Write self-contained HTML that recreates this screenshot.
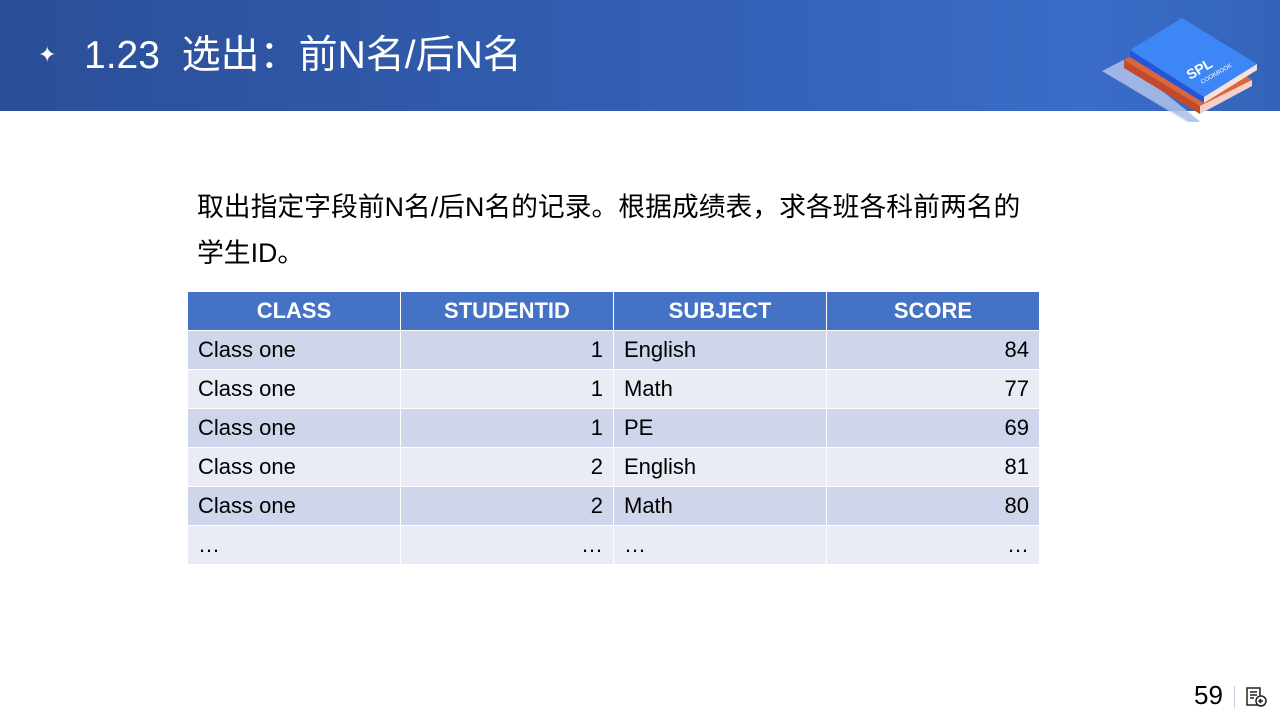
<!DOCTYPE html>
<html><head><meta charset="utf-8"><style>
body{margin:0;width:1280px;height:720px;position:relative;background:#fff;font-family:"Liberation Sans","Noto Sans CJK SC",sans-serif;overflow:hidden}
.hdr{position:absolute;left:0;top:0;width:1280px;height:111px;background:linear-gradient(90deg,#2b4e97 0%,#3462b8 60%,#3a6cc8 85%,#3464b9 100%)}
.title{position:absolute;left:84px;top:33px;color:#fff;font-size:39px;line-height:46px;white-space:nowrap}
.star{position:absolute;left:38px;top:42px;color:#fff;font-size:22px}
.p{position:absolute;left:197px;font-size:26.8px;line-height:34px;color:#000;white-space:nowrap}
table{position:absolute;left:187px;top:292px;border-collapse:collapse;font-size:22px}
td{height:39px;padding:0 10px;box-sizing:border-box;border:1px solid #fff;width:213px}
th{background:#4472c4;color:#fff;height:38px;box-sizing:border-box;padding:0;font-size:22px;border:1px solid #fff;border-top:0}
tr.o td{background:#cfd5ea}tr.e td{background:#e9ebf5}
.r{text-align:right}
</style></head><body>
<div class="hdr"></div>
<div class="star">✦</div>
<div class="title">1.23&nbsp; 选出：前N名/后N名</div>
<svg style="position:absolute;left:1090px;top:0" width="190" height="130">
<polygon points="12,71 33,60 110,122 100,122" fill="#8fa9e0" opacity="0.7"/>
<polygon points="12,71 34,60 110,121 97,122" fill="#b9c9ee" opacity="0.6"/>
<polygon points="34,60 90,30 162,80 110,112" fill="#d9663f"/>
<polygon points="34,60 34,68 110,114 110,106" fill="#c14a2c"/>
<polygon points="110,106 162,80 162,86 110,114" fill="#f3d0c8"/>
<polygon points="40,50 92,18 167,64 114,97" fill="#3d86f5"/>
<polygon points="40,50 40,57 114,103 114,97" fill="#2456d8"/>
<polygon points="114,97 167,64 167,70 114,103" fill="#f6e1dd"/>
<text x="0" y="0" transform="translate(100,80) rotate(-30)" fill="#fff" font-size="14" font-weight="bold" font-family="Liberation Sans">SPL</text>
<text x="0" y="0" transform="translate(112,84) rotate(-30)" fill="#fff" font-size="6" font-family="Liberation Sans">COOKBOOK</text>
</svg>
<div class="p" style="top:190px">取出指定字段前N名/后N名的记录。根据成绩表，求各班各科前两名的</div>
<div class="p" style="top:236px">学生ID。</div>
<table>
<tr><th>CLASS</th><th>STUDENTID</th><th>SUBJECT</th><th>SCORE</th></tr>
<tr class="o"><td>Class one</td><td class="r">1</td><td>English</td><td class="r">84</td></tr>
<tr class="e"><td>Class one</td><td class="r">1</td><td>Math</td><td class="r">77</td></tr>
<tr class="o"><td>Class one</td><td class="r">1</td><td>PE</td><td class="r">69</td></tr>
<tr class="e"><td>Class one</td><td class="r">2</td><td>English</td><td class="r">81</td></tr>
<tr class="o"><td>Class one</td><td class="r">2</td><td>Math</td><td class="r">80</td></tr>
<tr class="e"><td>…</td><td class="r">…</td><td>…</td><td class="r">…</td></tr>
</table>
<div style="position:absolute;left:1194px;top:680px;font-size:26px">59</div>
<div style="position:absolute;left:1234px;top:686px;width:1px;height:22px;background:#c8d0e0"></div>
<svg style="position:absolute;left:1244px;top:685px" width="24" height="24" fill="none" stroke="#222" stroke-width="1.5">
<path d="M3 3h13v17H3zM6 7h7M6 10h7M6 13h4"/><circle cx="17" cy="16" r="5" fill="#fff"/><path d="M19 16h-4m2-2l-2 2 2 2"/>
</svg>
</body></html>
